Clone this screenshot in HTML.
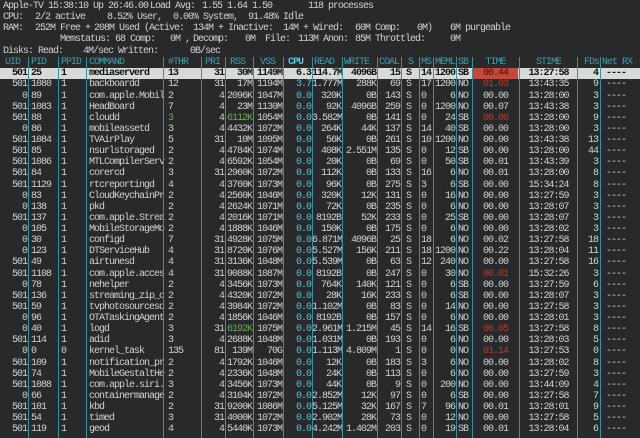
<!DOCTYPE html>
<html><head><meta charset="utf-8"><style>
html,body{margin:0;padding:0}
body{width:640px;height:438px;background:#27292a;position:relative;overflow:hidden;font-family:"Liberation Mono",monospace;font-size:10px;letter-spacing:-1px;color:#d0d2d3}
.x{position:absolute;white-space:pre;line-height:11px}
.r{position:absolute;left:0;width:640px;height:11px;line-height:11px}
.r span{position:absolute;top:0;white-space:pre}
.r span:nth-child(1){left:0;width:27px;text-align:right}
.r span:nth-child(2){left:31px}
.r span:nth-child(3){left:61px}
.r span:nth-child(4){left:89px}
.r span:nth-child(5){left:168px}
.r span:nth-child(6){left:200px;width:24px;text-align:right}
.r span:nth-child(7){left:226px;width:26px;text-align:right}
.r span:nth-child(8){left:254px;width:28px;text-align:right}
.r span:nth-child(9){left:285px;width:26px;text-align:right;color:#5cc3d8}
.r span:nth-child(10){left:312px;width:29px;text-align:right}
.r span:nth-child(11){left:343px;width:33px;text-align:right}
.r span:nth-child(12){left:378px;width:22px;text-align:right}
.r span:nth-child(13){left:406px}
.r span:nth-child(14){left:421px}
.r span:nth-child(15){left:434px;width:21px;text-align:right}
.r span:nth-child(16){left:458px}
.r span:nth-child(17){left:473px;width:45px;text-align:center}
.r span:nth-child(18){left:520px;width:57px;text-align:center}
.r span:nth-child(19){left:578px;width:20px;text-align:right}
.r span:nth-child(20){left:606px}
.hd{color:#3e9fb0}
.hd span:nth-child(n){text-align:left}
.sel{background:#d8d9d9;color:#111;font-weight:bold}
.sel span:nth-child(9){color:#111}
.sel span:nth-child(17){background:#c2493d;color:#6e1d16}
.red{color:#b8392e !important}
.grn{color:#67b34e !important}
.v{position:absolute;top:57px;width:1px;height:381px;background:#3b8f9a}
</style></head><body>
<div class="x" style="left:3px;top:1px">Apple-TV 15:38:10</div>
<div class="x" style="left:93px;top:1px">Up 26:46.00</div>
<div class="x" style="left:150px;top:1px">Load Avg:</div>
<div class="x" style="left:202px;top:1px">1.55 1.64 1.50</div>
<div class="x" style="left:308px;top:1px">118 processes</div>

<div class="x" style="left:3px;top:12px">CPU:</div>
<div class="x" style="left:35px;top:12px">2/2 active</div>
<div class="x" style="left:107px;top:12px">8.52% User,</div>
<div class="x" style="left:173px;top:12px">0.00% System,</div>
<div class="x" style="left:248px;top:12px">91.48% Idle</div>

<div class="x" style="left:3px;top:23px">RAM:</div>
<div class="x" style="left:35px;top:23px">252M Free +</div>
<div class="x" style="left:94px;top:23px">208M Used (Active:</div>
<div class="x" style="left:193px;top:23px">134M + Inactive:</div>
<div class="x" style="left:283px;top:23px">14M + Wired:</div>
<div class="x" style="left:355px;top:23px">60M Comp:</div>
<div class="x" style="left:417px;top:23px">0M)</div>
<div class="x" style="left:450px;top:23px">6M purgeable</div>

<div class="x" style="left:60px;top:34px">Memstatus: 68 Comp:</div>
<div class="x" style="left:170px;top:34px">0M ,</div>
<div class="x" style="left:193px;top:34px">Decomp:</div>
<div class="x" style="left:245px;top:34px">0M</div>
<div class="x" style="left:265px;top:34px">File:</div>
<div class="x" style="left:298px;top:34px">113M</div>
<div class="x" style="left:323px;top:34px">Anon:</div>
<div class="x" style="left:355px;top:34px">85M Throttled:</div>
<div class="x" style="left:450px;top:34px">0M</div>

<div class="x" style="left:3px;top:46px">Disks: Read:</div>
<div class="x" style="left:83px;top:46px">4M/sec Written:</div>
<div class="x" style="left:190px;top:46px">0B/sec</div>

<div class="r hd" style="top:57px"><span style="left:5px">UID</span><span>PID</span><span>PPID</span><span>COMMAND</span><span>#THR</span><span style="left:205px">PRI</span><span style="left:230px">RSS</span><span style="left:260px">VSS</span><span style="left:288px;color:#5cc3d8;font-weight:bold">CPU</span><span style="left:314px">READ</span><span style="left:344px">WRITE</span><span style="left:379px">COAL</span><span style="left:408px">S</span><span>MS</span><span style="left:435px">MEML</span><span>SB</span><span style="left:473px;text-align:center">TIME</span><span style="left:520px;text-align:center">STIME</span><span style="left:584px">FDs</span><span style="left:602px">Net RX</span></div>

<div class="r sel" style="top:68.3px"><span>501</span><span>25</span><span>1</span><span>mediaserverd</span><span>13</span><span>31</span><span>30M</span><span>1149M</span><span>6.3</span><span>114.7M</span><span>4096B</span><span>15</span><span>S</span><span>14</span><span>1200</span><span>SB</span><span>00.44</span><span>13:27:58</span><span>4</span><span>----</span></div>
<div class="r" style="top:79.4px"><span>501</span><span>1080</span><span>1</span><span>backboardd</span><span>12</span><span>31</span><span>17M</span><span>1194M</span><span>3.7</span><span>1.777M</span><span>288K</span><span>69</span><span>S</span><span>17</span><span>1200</span><span>NO</span><span class="red">01.03</span><span>13:43:35</span><span>9</span><span>----</span></div>
<div class="r" style="top:90.5px"><span>0</span><span>89</span><span>1</span><span>com.apple.Mobil</span><span>2</span><span>4</span><span>2096K</span><span>1047M</span><span>0.0</span><span>320K</span><span>0B</span><span>143</span><span>S</span><span>0</span><span>6</span><span>NO</span><span>00.00</span><span>13:28:00</span><span>3</span><span>----</span></div>
<div class="r" style="top:101.7px"><span>501</span><span>1083</span><span>1</span><span>HeadBoard</span><span>7</span><span>4</span><span>23M</span><span>1130M</span><span>0.0</span><span>92K</span><span>4096B</span><span>259</span><span>S</span><span>0</span><span>1200</span><span>NO</span><span>00.07</span><span>13:43:38</span><span>3</span><span>----</span></div>
<div class="r" style="top:112.8px"><span>501</span><span>88</span><span>1</span><span>cloudd</span><span class="grn">3</span><span>4</span><span class="grn">6112K</span><span>1054M</span><span>0.0</span><span>3.582M</span><span>0B</span><span>141</span><span>S</span><span>0</span><span>24</span><span>SB</span><span class="red">00.00</span><span>13:28:00</span><span>9</span><span>----</span></div>
<div class="r" style="top:123.9px"><span>0</span><span>86</span><span>1</span><span>mobileassetd</span><span>3</span><span>4</span><span>4432K</span><span>1072M</span><span>0.0</span><span>264K</span><span>44K</span><span>137</span><span>S</span><span>14</span><span>40</span><span>SB</span><span>00.00</span><span>13:28:00</span><span>3</span><span>----</span></div>
<div class="r" style="top:135px"><span>501</span><span>1084</span><span>1</span><span>TVAirPlay</span><span>5</span><span>31</span><span>10M</span><span>1095M</span><span>0.0</span><span>56K</span><span>0B</span><span>261</span><span>S</span><span>10</span><span>1200</span><span>NO</span><span>00.00</span><span>13:43:38</span><span>13</span><span>----</span></div>
<div class="r" style="top:146.2px"><span>501</span><span>85</span><span>1</span><span>nsurlstoraged</span><span>2</span><span>4</span><span>4784K</span><span>1074M</span><span>0.0</span><span>408K</span><span>2.551M</span><span>135</span><span>S</span><span>0</span><span>12</span><span>SB</span><span>00.00</span><span>13:28:00</span><span>44</span><span>----</span></div>
<div class="r" style="top:157.3px"><span>501</span><span>1086</span><span>1</span><span>MTLCompilerServ</span><span>2</span><span>4</span><span>6592K</span><span>1054M</span><span>0.0</span><span>20K</span><span>0B</span><span>69</span><span>S</span><span>0</span><span>50</span><span>SB</span><span>00.01</span><span>13:43:39</span><span>3</span><span>----</span></div>
<div class="r" style="top:168.4px"><span>501</span><span>84</span><span>1</span><span>corercd</span><span>3</span><span>31</span><span>2960K</span><span>1072M</span><span>0.0</span><span>112K</span><span>0B</span><span>133</span><span>S</span><span>16</span><span>6</span><span>NO</span><span>00.01</span><span>13:28:00</span><span>8</span><span>----</span></div>
<div class="r" style="top:179.5px"><span>501</span><span>1129</span><span>1</span><span>rtcreportingd</span><span>4</span><span>4</span><span>3760K</span><span>1073M</span><span>0.0</span><span>96K</span><span>0B</span><span>275</span><span>S</span><span>3</span><span>6</span><span>SB</span><span>00.00</span><span>15:34:24</span><span>8</span><span>----</span></div>
<div class="r" style="top:190.7px"><span>0</span><span>83</span><span>1</span><span>CloudKeychainPr</span><span>2</span><span>4</span><span>2560K</span><span>1046M</span><span>0.0</span><span>320K</span><span>12K</span><span>131</span><span>S</span><span>0</span><span>16</span><span>NO</span><span>00.00</span><span>13:27:59</span><span>3</span><span>----</span></div>
<div class="r" style="top:201.8px"><span>0</span><span>138</span><span>1</span><span>pkd</span><span>2</span><span>4</span><span>2624K</span><span>1071M</span><span>0.0</span><span>72K</span><span>0B</span><span>235</span><span>S</span><span>0</span><span>6</span><span>NO</span><span>00.00</span><span>13:28:07</span><span>3</span><span>----</span></div>
<div class="r" style="top:212.9px"><span>501</span><span>137</span><span>1</span><span>com.apple.Strea</span><span>2</span><span>4</span><span>2016K</span><span>1071M</span><span>0.0</span><span>8192B</span><span>52K</span><span>233</span><span>S</span><span>0</span><span>25</span><span>SB</span><span>00.00</span><span>13:28:07</span><span>3</span><span>----</span></div>
<div class="r" style="top:224px"><span>0</span><span>105</span><span>1</span><span>MobileStorageMo</span><span>2</span><span>4</span><span>1888K</span><span>1046M</span><span>0.0</span><span>150K</span><span>0B</span><span>175</span><span>S</span><span>0</span><span>6</span><span>NO</span><span>00.00</span><span>13:28:02</span><span>3</span><span>----</span></div>
<div class="r" style="top:235.2px"><span>0</span><span>30</span><span>1</span><span>configd</span><span>7</span><span>31</span><span>4928K</span><span>1075M</span><span>0.0</span><span>6.871M</span><span>4096B</span><span>25</span><span>S</span><span>18</span><span>6</span><span>NO</span><span>00.02</span><span>13:27:58</span><span>18</span><span>----</span></div>
<div class="r" style="top:246.3px"><span>0</span><span>123</span><span>1</span><span>DTServiceHub</span><span>4</span><span>31</span><span>8720K</span><span>1076M</span><span>0.0</span><span>5.527M</span><span>156K</span><span>211</span><span>S</span><span>18</span><span>1200</span><span>NO</span><span>00.22</span><span>13:28:04</span><span>11</span><span>----</span></div>
<div class="r" style="top:257.4px"><span>501</span><span>49</span><span>1</span><span>airtunesd</span><span>4</span><span>31</span><span>3136K</span><span>1048M</span><span>0.0</span><span>5.539M</span><span>0B</span><span>63</span><span>S</span><span>12</span><span>240</span><span>NO</span><span>00.00</span><span>13:27:58</span><span>16</span><span>----</span></div>
<div class="r" style="top:268.5px"><span>501</span><span>1108</span><span>1</span><span>com.apple.acces</span><span>4</span><span>31</span><span>9088K</span><span>1087M</span><span>0.0</span><span>8192B</span><span>0B</span><span>247</span><span>S</span><span>0</span><span>30</span><span>NO</span><span class="red">00.01</span><span>15:32:26</span><span>3</span><span>----</span></div>
<div class="r" style="top:279.6px"><span>0</span><span>78</span><span>1</span><span>nehelper</span><span>2</span><span>4</span><span>3456K</span><span>1073M</span><span>0.0</span><span>764K</span><span>140K</span><span>121</span><span>S</span><span>0</span><span>6</span><span>SB</span><span>00.00</span><span>13:27:59</span><span>6</span><span>----</span></div>
<div class="r" style="top:290.8px"><span>501</span><span>136</span><span>1</span><span>streaming_zip_c</span><span>2</span><span>4</span><span>4320K</span><span>1072M</span><span>0.0</span><span>28K</span><span>16K</span><span>233</span><span>S</span><span>0</span><span>6</span><span>SB</span><span>00.00</span><span>13:28:07</span><span>3</span><span>----</span></div>
<div class="r" style="top:301.9px"><span>501</span><span>59</span><span>1</span><span>tvphotosourcesd</span><span>2</span><span>4</span><span>3984K</span><span>1072M</span><span>0.0</span><span>1.102M</span><span>0B</span><span>83</span><span>S</span><span>0</span><span>14</span><span>NO</span><span>00.00</span><span>13:27:58</span><span>3</span><span>----</span></div>
<div class="r" style="top:313px"><span>0</span><span>96</span><span>1</span><span>OTATaskingAgent</span><span>2</span><span>4</span><span>1856K</span><span>1046M</span><span>0.0</span><span>8192B</span><span>0B</span><span>157</span><span>S</span><span>0</span><span>6</span><span>NO</span><span>00.00</span><span>13:28:01</span><span>3</span><span>----</span></div>
<div class="r" style="top:324.1px"><span>0</span><span>40</span><span>1</span><span>logd</span><span>3</span><span>31</span><span class="grn">6192K</span><span>1075M</span><span>0.0</span><span>2.961M</span><span>1.215M</span><span>45</span><span>S</span><span>14</span><span>16</span><span>SB</span><span class="red">00.05</span><span>13:27:58</span><span>8</span><span>----</span></div>
<div class="r" style="top:335.3px"><span>501</span><span>114</span><span>1</span><span>adid</span><span>3</span><span>4</span><span>2688K</span><span>1048M</span><span>0.0</span><span>1.031M</span><span>0B</span><span>193</span><span>S</span><span>0</span><span>6</span><span>NO</span><span>00.00</span><span>13:28:03</span><span>5</span><span>----</span></div>
<div class="r" style="top:346.4px"><span>0</span><span>0</span><span>0</span><span>kernel_task</span><span>135</span><span>81</span><span>139M</span><span>70G</span><span>0.0</span><span>1.113M</span><span>4.809M</span><span>1</span><span>S</span><span>0</span><span>0</span><span>NO</span><span class="red">01.14</span><span>13:27:53</span><span>0</span><span>----</span></div>
<div class="r" style="top:357.5px"><span>501</span><span>109</span><span>1</span><span>notification_pr</span><span>2</span><span>4</span><span>1792K</span><span>1046M</span><span>0.0</span><span>12K</span><span>0B</span><span>183</span><span>S</span><span>3</span><span>6</span><span>NO</span><span>00.00</span><span>13:28:02</span><span>8</span><span>----</span></div>
<div class="r" style="top:368.6px"><span>501</span><span>74</span><span>1</span><span>MobileGestaltHe</span><span>2</span><span>4</span><span>2336K</span><span>1048M</span><span>0.0</span><span>24K</span><span>0B</span><span>113</span><span>S</span><span>0</span><span>6</span><span>NO</span><span>00.00</span><span>13:27:59</span><span>3</span><span>----</span></div>
<div class="r" style="top:379.8px"><span>501</span><span>1088</span><span>1</span><span>com.apple.siri.</span><span>3</span><span>4</span><span>3456K</span><span>1073M</span><span>0.0</span><span>44K</span><span>0B</span><span>9</span><span>S</span><span>0</span><span>200</span><span>NO</span><span>00.00</span><span>13:44:09</span><span>4</span><span>----</span></div>
<div class="r" style="top:390.9px"><span>0</span><span>66</span><span>1</span><span>containermanage</span><span>2</span><span>4</span><span>3104K</span><span>1072M</span><span>0.0</span><span>2.852M</span><span>12K</span><span>97</span><span>S</span><span>0</span><span>6</span><span>SB</span><span>00.00</span><span>13:27:58</span><span>7</span><span>----</span></div>
<div class="r" style="top:402px"><span>501</span><span>101</span><span>1</span><span>kbd</span><span>2</span><span>31</span><span>9200K</span><span>1086M</span><span>0.0</span><span>5.125M</span><span>32K</span><span>167</span><span>S</span><span>7</span><span>96</span><span>NO</span><span>00.01</span><span>13:28:01</span><span>9</span><span>----</span></div>
<div class="r" style="top:413.1px"><span>501</span><span>54</span><span>1</span><span>timed</span><span>3</span><span>31</span><span>4000K</span><span>1072M</span><span>0.0</span><span>2.902M</span><span>28K</span><span>73</span><span>S</span><span>0</span><span>12</span><span>NO</span><span>00.00</span><span>13:27:58</span><span>5</span><span>----</span></div>
<div class="r" style="top:424.3px"><span>501</span><span>119</span><span>1</span><span>geod</span><span>4</span><span>4</span><span>5440K</span><span>1073M</span><span>0.0</span><span>4.242M</span><span>1.402M</span><span>203</span><span>S</span><span>0</span><span>19</span><span>SB</span><span>00.01</span><span>13:28:04</span><span>6</span><span>----</span></div>

<div class="v" style="left:28px"></div><div class="v" style="left:58px"></div><div class="v" style="left:86px"></div><div class="v" style="left:163px"></div><div class="v" style="left:201px"></div><div class="v" style="left:225px"></div><div class="v" style="left:253px"></div><div class="v" style="left:283px"></div><div class="v" style="left:312px"></div><div class="v" style="left:342px"></div><div class="v" style="left:377px"></div><div class="v" style="left:401px"></div><div class="v" style="left:419px"></div><div class="v" style="left:433px"></div><div class="v" style="left:456px"></div><div class="v" style="left:472px"></div><div class="v" style="left:519px"></div><div class="v" style="left:577px"></div><div class="v" style="left:600px"></div>
</body></html>
